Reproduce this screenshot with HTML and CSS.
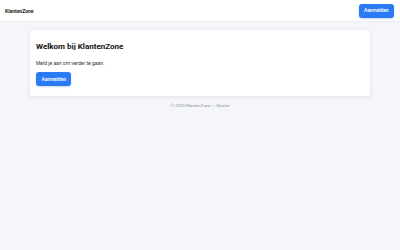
FILE: index.html
```html
<!DOCTYPE html>
<html lang="nl">
<head>
  <meta charset="UTF-8">
  <title>KlantenZone</title>
  <link rel="stylesheet" href="styles.css">
</head>
<body>

  <header class="topbar">
    <div class="brand">KlantenZone</div>
    <button class="btn">Aanmelden</button>
  </header>

  <main class="content">
    <section class="card">
      <h2>Welkom bij KlantenZone</h2>
      <p>Meld je aan om verder te gaan.</p>
      <button class="btn">Aanmelden</button>
    </section>
    <footer class="footer">© 2025 KlantenZone — Starter</footer>
  </main>

</body>
</html>
```
FILE: styles.css
```css
body {
  margin: 0;
  min-height: 100vh;
  background: #f4f6fa;
  color: #1a1d23;
  font-family: Roboto, "Liberation Sans", Arial, sans-serif;
}
.topbar {
  display: flex;
  justify-content: space-between;
  align-items: center;
  height: 21px;
  padding: 0 6px 0 5px;
  background: #fff;
  border-bottom: 1px solid #eceef3;
}
.brand {
  font-size: 5px;
  font-weight: 700;
}
.btn {
  display: block;
  height: 14px;
  padding: 0 5.5px;
  border: none;
  border-radius: 3px;
  background: #2b7bf4;
  color: #fff;
  font-family: inherit;
  font-size: 4.8px;
  font-weight: 600;
  box-shadow: 0 1px 2px rgba(30, 90, 200, 0.25);
}
.content {
  padding: 8px 30px;
}
.card {
  padding: 12px 6px 10px;
  background: #fff;
  border-radius: 3px;
  box-shadow: 0 1px 5px rgba(20, 30, 60, 0.09);
}
.card h2 {
  margin: 0 0 7.5px;
  font-size: 8px;
  line-height: 10px;
  font-weight: 700;
  color: #111;
}
.card p {
  margin: 0 0 5.5px;
  font-size: 5px;
  line-height: 7px;
  color: #333;
}
.footer {
  margin-top: 7px;
  text-align: center;
  font-size: 4.4px;
  line-height: 6px;
  color: #8a8f98;
}
```
